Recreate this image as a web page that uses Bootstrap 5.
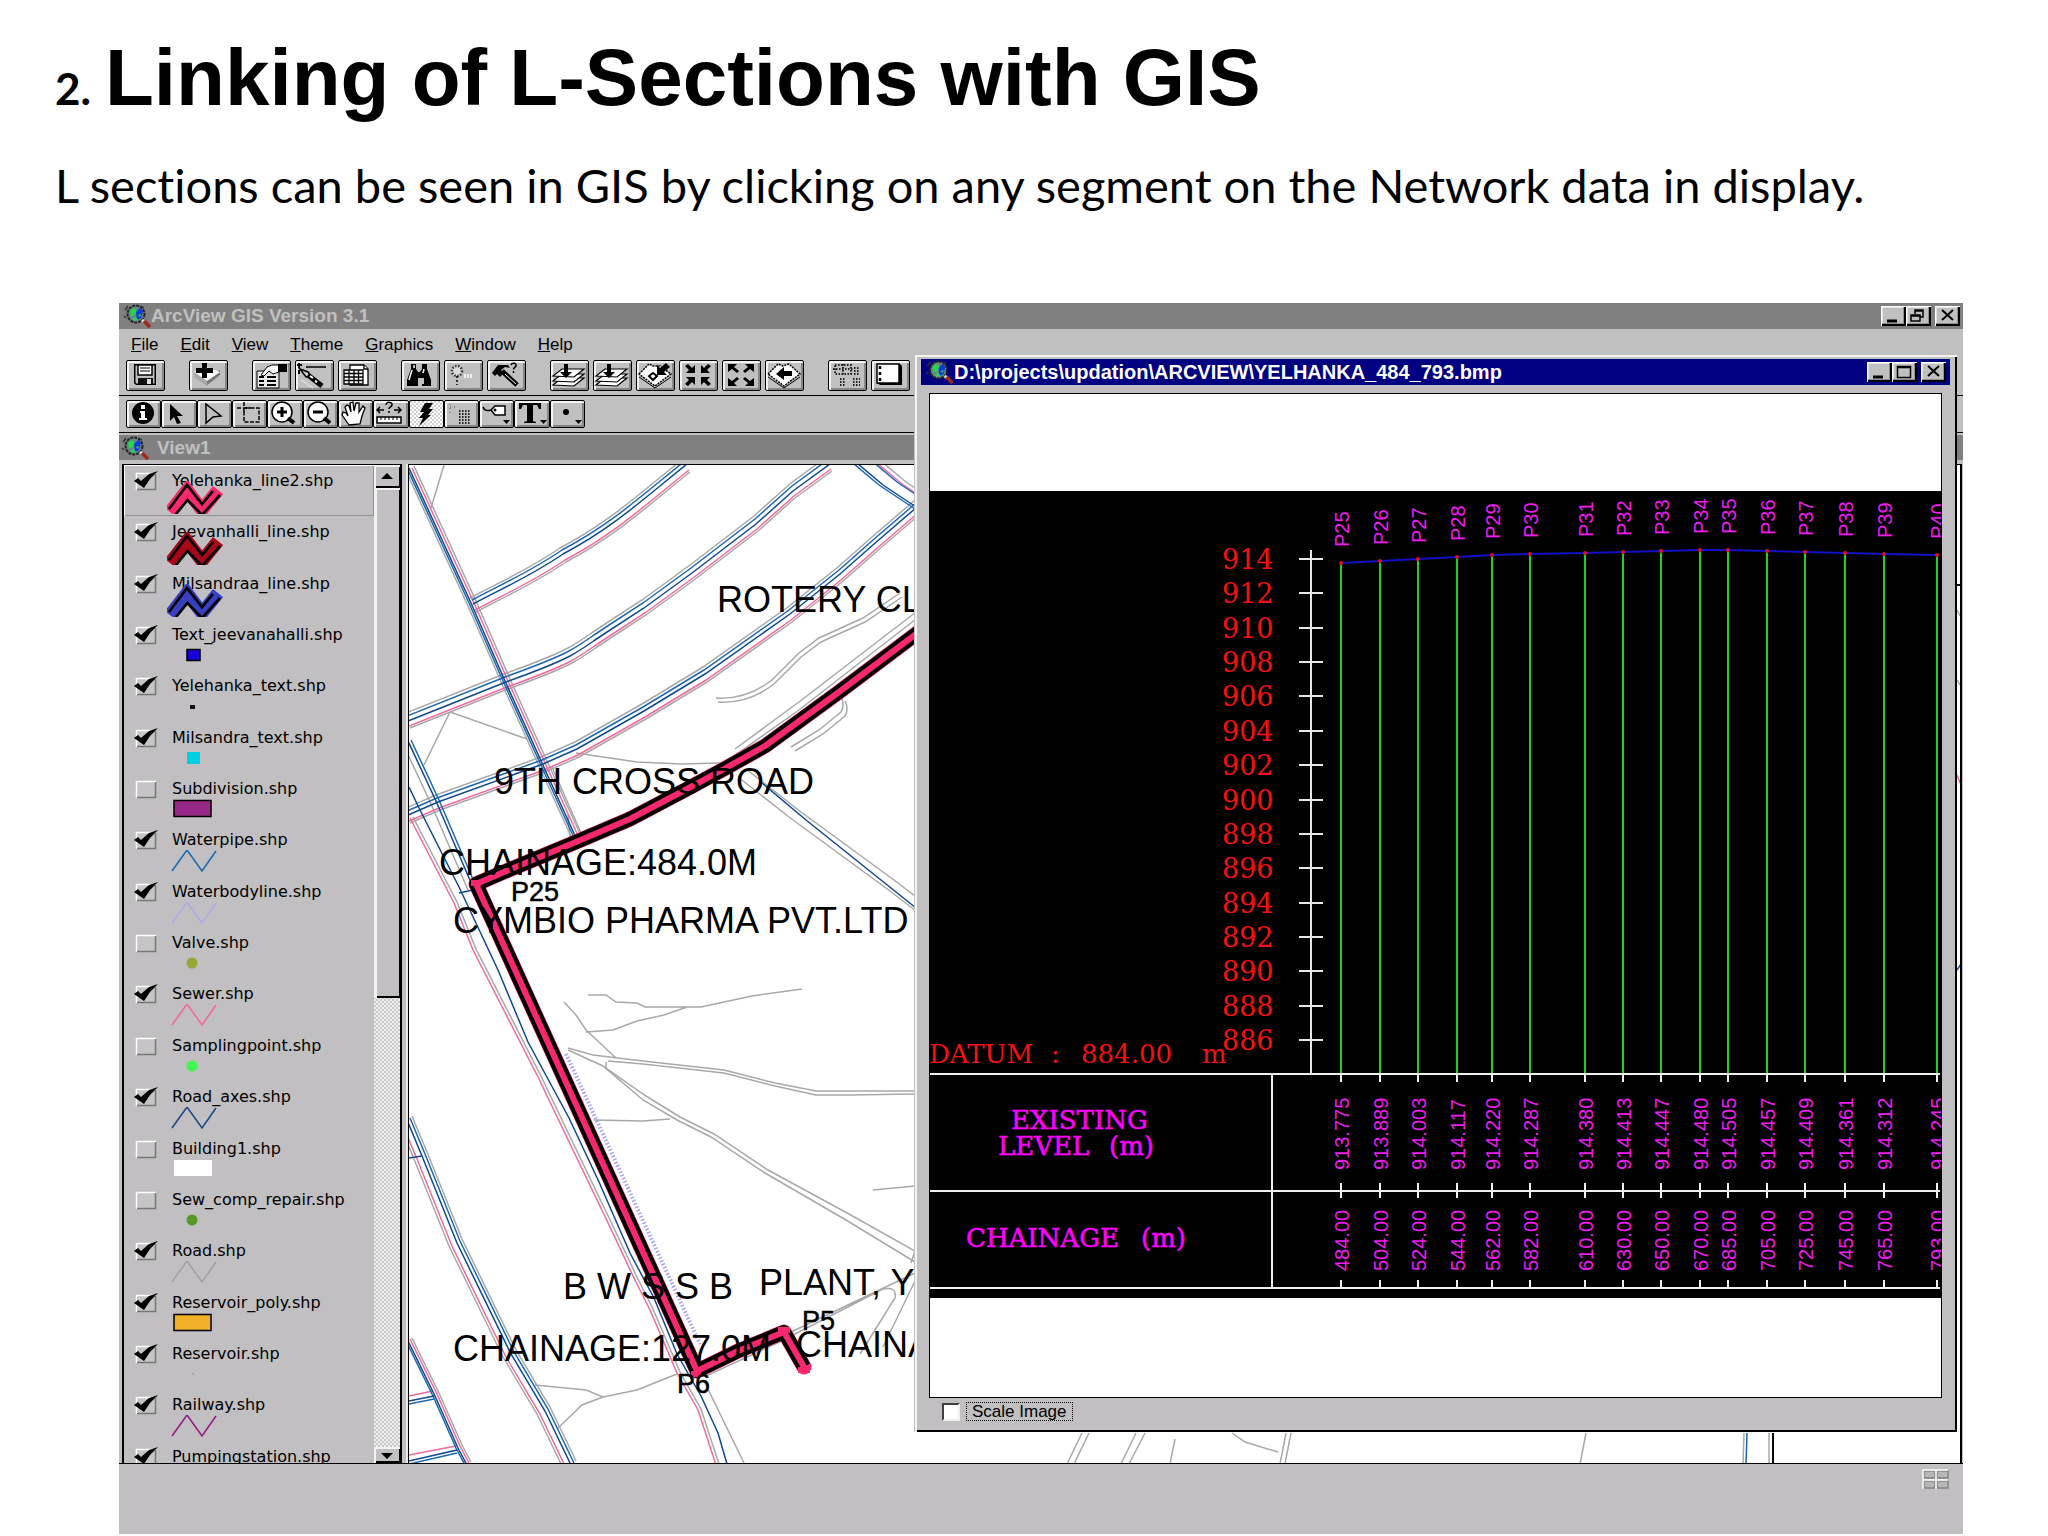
<!DOCTYPE html>
<html lang="en">
<head>
<meta charset="utf-8">
<meta name="viewport" content="width=device-width, initial-scale=1">
<title>Linking of L-Sections with GIS</title>
<link rel="stylesheet" href="https://cdn.jsdelivr.net/npm/bootstrap@5.3.0/dist/css/bootstrap.min.css">
<style>
  :root { --face:#c0c0c0; --pane:#c1bfc1; --shade:#808080; }
  body { background:#fff; color:#000; font-family:"Liberation Sans",Arial,sans-serif; overflow-x:hidden; }
  .slide-head { padding:32px 55px 90px; }
  .slide-head h1 { font-size:80px; line-height:92px; font-weight:700; margin-bottom:33px; }
  .slide-num { font-family:Lato,sans-serif; font-size:44px; line-height:1; margin-right:14px; }
  .slide-head p { font-family:Lato,sans-serif; font-size:47px; line-height:56px; font-variant-ligatures:none; }
  .desk { margin:0 85px 1px 119px; background:var(--face); }
  .bar-title { height:26px; background:var(--shade); color:var(--face); font-size:19px; line-height:26px; font-weight:700; padding:0 3px 0 4px; }
  .bar-title svg { flex:none; }
  .win-btn { width:25px; height:20px; padding:0; border:0; border-radius:0; background:var(--face); line-height:0;
    box-shadow:inset 1px 1px #fff, inset -2px -2px #000, inset -3px -3px #909090, inset 2px 2px #e4e4e4; }
  .menu-bar { height:28px; padding:4px 12px; gap:22px; font-size:17px; line-height:24px; }
  .menu-bar a { color:#000; text-decoration:none; }
  .tools-main { padding:3px 7px 4px; gap:24px; border-bottom:1px solid #000; }
  .tools-main .tool { width:39px; height:31px; }
  .tools-sub { padding:4px 7px; border-bottom:1px solid #000; }
  .tools-sub .strip { width:459px; }
  .tools-sub .tool { height:28px; flex:1 1 0; }
  .tool { padding:0; border:1px solid #000; border-radius:2px; background:var(--face); line-height:0; overflow:hidden;
    box-shadow:inset 2px 2px #f4f4f4, inset -2px -2px #868686; display:flex; align-items:center; justify-content:center; }
  .tool svg { flex:none; }
  .tool.held { background:repeating-conic-gradient(#fff 0 25%,#d0d0d0 0 50%) 0 0/4px 4px; box-shadow:none; }
  .bar-view { height:25px; margin-top:2px; line-height:25px; padding-left:2px; }
  .bar-view span { padding-left:8px; }
  .work { height:1004px; padding:4px 1px 0 3px; gap:6px; border-bottom:1px solid #000; }
  .toc { width:280px; flex:none; background:var(--pane); border:solid #000; border-width:1px 2px 0; overflow:hidden; }
  .toc-list { height:1027px; display:grid; grid-auto-rows:1fr; font-family:"DejaVu Sans",Verdana,sans-serif; font-size:16px; line-height:20px; }
  .toc-list li { padding:6px 0 0 10px; }
  .toc-list li.on { box-shadow:inset 1px 1px #fff, inset -1px -1px #909090; }
  .toc-list .rowline { gap:14px; height:20px; }
  .toc-list svg { display:block; margin-left:33px; position:relative; }
  .toc-list svg.tall { margin-top:-10px; }
  .tick { appearance:none; width:24px; height:20px; margin:0; flex:none; background:center/24px 20px no-repeat url("data:image/svg+xml,%3Csvg xmlns='http://www.w3.org/2000/svg' viewBox='0 0 24 20'%3E%3Cpath d='M2 2h20v17H2z' fill='%23c6c4c6'/%3E%3Cpath d='M2.500 19V2.500H22' fill='none' stroke='%23fff' stroke-width='1.500'/%3E%3Cpath d='M3 18.500h18.500V3' fill='none' stroke='%23777' stroke-width='1.500'/%3E%3C/svg%3E"); }
  .tick:checked { background-image:url("data:image/svg+xml,%3Csvg xmlns='http://www.w3.org/2000/svg' viewBox='0 0 24 20'%3E%3Cpath d='M2 2h20v17H2z' fill='%23c6c4c6'/%3E%3Cpath d='M2.500 19V2.500H22' fill='none' stroke='%23fff' stroke-width='1.500'/%3E%3Cpath d='M3 18.500h18.500V3' fill='none' stroke='%23777' stroke-width='1.500'/%3E%3Cpath d='M0 10l4-3 3 3 8-7 9-3-8 8-6 9z'/%3E%3C/svg%3E"); }
  .scroll { width:26px; flex:none; background:repeating-conic-gradient(#f0f0f0 0 25%,#c8c8c8 0 50%) 0 0/4px 4px; }
  .scroll button { border:0; padding:0; height:23px; line-height:0; border-radius:0; background:var(--pane); box-shadow:inset 2px 2px #f2f2f2, inset -1px -2px #000; }
  .scroll .down { height:16px; }
  .thumb { height:510px; background:var(--pane); box-shadow:inset 3px 2px #f2f2f2, inset -1px -2px #000; }
  .map-pane { background:#fff; border:solid #000; border-width:1px 2px 0 1px; min-width:0; box-shadow:-2px 0 #e8e8e8; }
  .map-pane svg { display:block; width:100%; height:100%; }
  .map-text { font:36px "Liberation Sans",Arial,sans-serif; }
  .map-node { font:27px "Liberation Sans",Arial,sans-serif; stroke:#000; stroke-width:.5px; }
  .status { height:70px; background:#c1bfc2; padding:5px 14px; }
  .pic-win { position:absolute; top:52px; left:796px; right:6px; background:var(--pane); padding:4px 7px 11px 6px;
    box-shadow:inset 2px 2px #f4f4f4, inset -2px -2px #000, -1px 0 #c0c0c0; }
  .pic-win .bar-title { background:#000080; color:#fff; font-size:20px; padding-right:4px; }
  .pic-view { margin:8px 8px 0; border:1px solid #000; background:#fff; padding:97px 0 99px; }
  .pic-view svg { display:block; width:100%; background:#000; }
  .ax { font:27px "DejaVu Serif",serif; fill:#f81010; }
  .datum { font:26px "DejaVu Serif",serif; fill:#f81010; }
  .cap { font:26px "DejaVu Serif",serif; fill:#f0f; stroke:#f0f; stroke-width:.5px; }
  .val { font:20px "Liberation Sans",Arial,sans-serif; fill:#f01cf0; }
  .pic-foot { padding:4px 0 0 21px; gap:6px; font-size:17px; line-height:17px; }
  .pic-foot input { appearance:none; width:18px; height:18px; margin:0; background:#fff; border:2px solid; border-color:#404040 #f0f0f0 #f0f0f0 #404040; }
  .pic-foot label { border:1px dotted #000; padding:0 5px; }
</style>
</head>
<body>
<svg width="0" height="0" class="position-absolute" aria-hidden="true">
  <defs>
    <symbol id="globe" viewBox="0 0 28 24"><circle cx="13" cy="10" r="8.500" fill="#6a8088" stroke="#222" stroke-width="2" stroke-dasharray="3 1"/><path d="M7 7l4-3 3 3-2 4-4 2z" fill="#20d848"/><path d="M13 8l4-4 3 3-2 7-4 2z" fill="#1038d8"/><path d="M9 14l4-1 2 3-4 1z" fill="#30d060"/><path d="M15 11l3-1-1 3z" fill="#30d060"/><path d="M2 6l3-4M3 14l-2-2M18 2l3 2" stroke="#333" stroke-width="1.500"/><path d="M19 16l3 2" stroke="#ddd" stroke-width="3"/><path d="M21 17l6 6" stroke="#a02818" stroke-width="3.500"/></symbol>
    <symbol id="thick" viewBox="0 -10 56 33"><path d="M3 21L20-1 35 19 51-1" fill="none" stroke="currentColor" stroke-width="13"/><path d="M2 18L20-6 35 13 46 0M9 23L20.500 9 35 24 53 4" fill="none" stroke="#000" stroke-width="2.700"/></symbol>
    <symbol id="thin" viewBox="0 0 56 24"><path d="M5 21L20 0 35 21 49 1" fill="none" stroke="currentColor" stroke-width="1.500"/></symbol>
    <symbol id="area" viewBox="0 0 56 24"><path d="M7 1.500h37v16H7z" fill="currentColor" stroke="#000" stroke-width="1.500"/></symbol>
    <symbol id="spot" viewBox="0 0 56 24"><circle cx="25" cy="10" r="5.500" fill="currentColor"/></symbol>
    <symbol id="stack" viewBox="0 0 39 31"><g fill="#fff" stroke="#000" stroke-width="1.200"><path d="M3 25l9-7h22l-10 8z"/><path d="M3 21l9-7h22l-10 8z"/><path d="M3 16l9-7h22l-10 8z"/></g><path d="M14 4h4v8h4l-6 6-6-6h4z"/></symbol>
    <symbol id="lens" viewBox="0 0 35 28"><circle cx="15" cy="12" r="10" fill="#fff" stroke="#000" stroke-width="1.500"/><path d="M21 18l6 5" stroke="#000" stroke-width="4"/></symbol>
    <symbol id="i-close" viewBox="0 0 25 20"><path d="M7 4l11 10M18 4L7 14" stroke="#000" stroke-width="2"/></symbol>
    <symbol id="i-min" viewBox="0 0 25 20"><path d="M6 13.500h10v3H6z"/></symbol>
  </defs>
</svg>

<header class="slide-head">
  <h1><span class="slide-num">2.</span>Linking of L-Sections with GIS</h1>
  <p class="mb-0">L sections can be seen in GIS by clicking on any segment on the Network data in display.</p>
</header>

<main class="desk position-relative">
  <div class="bar-title d-flex align-items-center">
    <svg width="28" height="24"><use href="#globe"/></svg><span class="flex-grow-1">ArcView GIS Version 3.1</span>
    <button class="win-btn" aria-label="Minimize"><svg width="25" height="20"><use href="#i-min"/></svg></button>
    <button class="win-btn" aria-label="Restore"><svg width="25" height="20" fill="none" stroke="#000" stroke-width="1.500"><path d="M9 8V4h8v7h-3M9 5h8"/><path d="M5 9h9v6H5zM5 10h9"/></svg></button>
    <button class="win-btn ms-1" aria-label="Close"><svg width="25" height="20"><use href="#i-close"/></svg></button>
  </div>
  <nav class="menu-bar d-flex">
    <a href="#"><u>F</u>ile</a><a href="#"><u>E</u>dit</a><a href="#"><u>V</u>iew</a><a href="#"><u>T</u>heme</a><a href="#"><u>G</u>raphics</a><a href="#"><u>W</u>indow</a><a href="#"><u>H</u>elp</a>
  </nav>
  <div class="tools-main d-flex">
    <button class="tool" aria-label="Save"><svg width="39" height="31"><path d="M8 4h22v21H10l-2-2z"/><path d="M9.500 5.500h19v18h-18l-1-1z" fill="#c0c0c0"/><path d="M12 5h14v10H12z" fill="#fff" stroke="#000" stroke-width="1.500"/><path d="M14 8h10M14 11h10" stroke="#000"/><path d="M12 18h15v6H12z" fill="#111"/><path d="M21 19h4v5h-4z" fill="#ddd"/></svg></button>
    <button class="tool" aria-label="Add theme"><svg width="39" height="31"><path d="M17 26l14-11V10l-14 8z" fill="#777"/><path d="M5 12l13-5 13 5-13 9z" fill="#fff"/><path d="M5 12v5l13 9v-5z" fill="#a8a8a8"/><path d="M13 3h5v5h6v5h-6v5h-5v-5H7V8h6z"/></svg></button>
    <div class="d-flex gap-1">
      <button class="tool" aria-label="Theme properties"><svg width="39" height="31"><path d="M5 11h22v17H5z" fill="#e8e8e8" stroke="#000"/><path d="M7 17h5M15 17h9M7 21h5M15 21h9M7 25h5M15 25h9" stroke="#000" stroke-width="2"/><path d="M9 15l6-8 5-2h7v7l-6 2-4-3-5 5z" fill="#fff" stroke="#000"/><path d="M26 4h9v8h-9z"/></svg></button>
      <button class="tool" aria-label="Edit legend"><svg width="39" height="31"><path d="M11 7h20" stroke="#000" stroke-width="1.500"/><path d="M4 3v5M2 5h5M4 10v4" stroke="#000" stroke-width="2"/><path d="M5 9l8 3 3 4-5 1z" fill="#ccc" stroke="#000" stroke-width="1.500"/><path d="M13 15l14 11" stroke="#000" stroke-width="5"/><path d="M15 16l3 2M20 21l2 1" stroke="#fff" stroke-width="2"/><path d="M6 20l12 8" stroke="#eee"/></svg></button>
      <button class="tool" aria-label="Open table"><svg width="39" height="31" fill="#fff" stroke="#000" stroke-width="1.300"><path d="M12 5h14l4 4v16H12z"/><path d="M26 5v4h4"/><path d="M6 10h19v14H6zM6 13.500h19M6 17h19M6 20.500h19M11 10v14M16 10v14M20.500 10v14"/></svg></button>
    </div>
    <div class="d-flex gap-1">
      <button class="tool" aria-label="Find"><svg width="39" height="31"><path d="M10 4h5v5l2 3h2l2-3V4h5v5l4 11v6h-9v-8h-4v8H6v-6l4-11z"/><path d="M11 10L8 20M23 9l-1 4M13 5v3M22 18v6" stroke="#fff" stroke-width="1.500"/></svg></button>
      <button class="tool" aria-label="Locate"><svg width="39" height="31"><circle cx="13" cy="11" r="5" fill="#ddd" stroke="#333" stroke-width="2.500" stroke-dasharray="1.500 1.500"/><path d="M13 16v9" stroke="#000" stroke-width="1.500" stroke-dasharray="2 2"/><path d="M20 16h9" stroke="#eee" stroke-width="4" stroke-dasharray="2 1"/></svg></button>
      <button class="tool" aria-label="Query builder"><svg width="39" height="31"><path d="M5 13l6-8h10l2 3-5-1-4 3 3 3-4 4-3-3-2 2z"/><path d="M15 11l15 14" stroke="#000" stroke-width="5"/><path d="M18 14l11 10" stroke="#fff"/><path d="M24 5c1-3 6-2 5 1-.5 1.500-2.500 1.500-2.500 3.500M26.500 11v2" fill="none" stroke="#000" stroke-width="1.500"/></svg></button>
    </div>
    <div class="d-flex gap-1">
      <button class="tool" aria-label="Zoom to full extent"><svg width="39" height="31"><use href="#stack"/></svg></button>
      <button class="tool" aria-label="Zoom to active theme"><svg width="39" height="31"><use href="#stack"/></svg></button>
      <button class="tool" aria-label="Zoom to selected"><svg width="39" height="31"><path d="M3 14L13 4l4 2h7l11 8-16 12z" fill="#fff" stroke="#000" stroke-width="1.500" stroke-dasharray="2 1"/><path d="M3 17l16 11 16-11" fill="none" stroke="#000"/><path d="M21 15V5l3 3 6-5 4 4-6 5 3 3z"/><path d="M17 13l4 3-4 4-4-4z" fill="none" stroke="#000" stroke-width="2"/></svg></button>
      <button class="tool" aria-label="Zoom in"><svg width="39" height="31"><path d="M16 13V5l-3 3-4-4-3 2 4 4-3 3zM22 13V5l3 3 4-4 3 2-4 4 3 3zM16 17v8l-3-3-4 4-3-2 4-4-3-3zM22 17v8l3-3 4 4 3-2-4-4 3-3z"/></svg></button>
      <button class="tool" aria-label="Zoom out"><svg width="39" height="31"><path d="M6 4h9l-3 3 5 4-2 2-5-4-4 3zM32 4h-9l3 3-5 4 2 2 5-4 4 3zM6 26h9l-3-3 5-4-2-2-5 4-4-3zM32 26h-9l3-3-5-4 2-2 5 4 4-3z"/></svg></button>
      <button class="tool" aria-label="Previous extent"><svg width="39" height="31"><path d="M3 14L13 4l5 2 6-2 11 10-16 12z" fill="#fff" stroke="#000" stroke-width="1.500" stroke-dasharray="2 1"/><path d="M3 17l16 11 16-11" fill="none" stroke="#000"/><path d="M11 14l8-7v4h8v5h-8v4z"/></svg></button>
    </div>
    <div class="d-flex gap-1">
      <button class="tool" aria-label="Select by graphics"><svg width="39" height="31" fill="none" stroke="#222" stroke-width="2" stroke-dasharray="1.500 1.500"><path d="M7 5h16v9H7zM15 4v12M5 9h20"/><path d="M26 8h6M26 11h6M26 14h6M12 19h6M12 22h6M12 25h6M25 19h7M25 22h7M25 25h7"/></svg></button>
      <button class="tool" aria-label="Layout"><svg width="39" height="31"><path d="M6 4h23l2 2v19H9l-3-2z"/><path d="M6 4h22v19H6z" fill="#fff" stroke="#000" stroke-width="1.500"/><path d="M9 6v16" stroke="#000" stroke-width="2.500" stroke-dasharray="3 3"/></svg></button>
    </div>
  </div>
  <div class="tools-sub">
    <div class="strip d-flex">
      <button class="tool" aria-label="Identify"><svg width="35" height="28"><circle cx="17" cy="13" r="11"/><path d="M14 11h5v7h2v2h-8v-2h2v-5h-1zM15 5h4v4h-4z" fill="#fff"/></svg></button>
      <button class="tool" aria-label="Pointer"><svg width="35" height="28"><path d="M9 4l13 12h-6l4 7-4 1-3-7-4 4z"/></svg></button>
      <button class="tool" aria-label="Vertex edit"><svg width="35" height="28"><path d="M9 4l15 12-8 1-7 6z" fill="none" stroke="#000" stroke-width="1.500"/></svg></button>
      <button class="tool" aria-label="Select feature"><svg width="35" height="28" fill="none" stroke="#000" stroke-width="1.500"><path d="M13 8h14v14H12V12" stroke-dasharray="4 1.500"/><path d="M5 8h14M12 2v12" stroke-dasharray="4 2"/></svg></button>
      <button class="tool" aria-label="Magnify"><svg width="35" height="28"><use href="#lens"/><path d="M10 12h10M15 7v10" stroke="#000" stroke-width="3"/></svg></button>
      <button class="tool" aria-label="Reduce"><svg width="35" height="28"><use href="#lens"/><path d="M10 12h10" stroke="#000" stroke-width="3"/></svg></button>
      <button class="tool" aria-label="Pan"><svg width="35" height="28"><path d="M11 25L4 15l1-3 3 1 2 3-3-9 2-2 2 1 2 6-1-9 3-1 1 9 2-8 3 0v9l4-6 2 2-3 8-2 8z" fill="#fff" stroke="#000" stroke-width="1.300"/></svg></button>
      <button class="tool" aria-label="Measure"><svg width="35" height="28"><path d="M4 17h24v6H4z" fill="#fff" stroke="#000" stroke-width="1.500"/><path d="M8 17v3M12 17v3M16 17v3M20 17v3M24 17v3" stroke="#000"/><path d="M4 10h7M21 10h7M7 7l-3 3 3 3M25 7l3 3-3 3M13 5c0-4 7-3 6 0-.5 2-3 2-3 4M16 11v2" fill="none" stroke="#000" stroke-width="1.500"/></svg></button>
      <button class="tool held" aria-label="Hot link"><svg width="35" height="28"><path d="M16 3h8l-4 6h4l-5 6h3l-12 11 4-8h-4l5-6h-4z"/></svg></button>
      <button class="tool" aria-label="Area of interest"><svg width="35" height="28"><path d="M15 11h12M15 14h12M15 17h12M15 20h12M15 23h12" stroke="#222" stroke-width="1.800" stroke-dasharray="1.500 1.500"/><path d="M6 4v10M6 7h8" stroke="#555" stroke-dasharray="1 3"/></svg></button>
      <button class="tool" aria-label="Label"><svg width="35" height="28"><path d="M12 10l4-4h10v9H16z" fill="#fff" stroke="#000" stroke-width="1.500"/><path d="M4 7c1 4 5 4 8 3" fill="none" stroke="#000" stroke-width="1.500"/><circle cx="16" cy="10" r="1.500"/><path d="M24 20h7l-3.500 4z"/></svg></button>
      <button class="tool" aria-label="Text"><svg width="35" height="28"><path d="M4 3h22v6h-2l-2-4h-4v16l3 1v1H9v-1l3-1V5H8L6 9H4z"/><path d="M25 20h7l-3.500 4z"/></svg></button>
      <button class="tool" aria-label="Draw point"><svg width="35" height="28"><circle cx="16" cy="12" r="3"/><path d="M25 20h7l-3.500 4z"/></svg></button>
    </div>
  </div>
  <div class="bar-title bar-view d-flex align-items-center"><svg width="28" height="24"><use href="#globe"/></svg><span>View1</span></div>

  <div class="work d-flex">
    <aside class="toc d-flex">
      <ul class="toc-list list-unstyled mb-0 flex-grow-1">
        <li class="on"><div class="rowline d-flex"><input class="tick" type="checkbox" id="t1" checked><label for="t1">Yelehanka_line2.shp</label></div><svg class="tall" width="56" height="33" color="#f8286e"><use href="#thick"/></svg></li>
        <li><div class="rowline d-flex"><input class="tick" type="checkbox" id="t2" checked><label for="t2">Jeevanhalli_line.shp</label></div><svg class="tall" width="56" height="33" color="#a80818"><use href="#thick"/></svg></li>
        <li><div class="rowline d-flex"><input class="tick" type="checkbox" id="t3" checked><label for="t3">Milsandraa_line.shp</label></div><svg class="tall" width="56" height="33" color="#3840c0"><use href="#thick"/></svg></li>
        <li><div class="rowline d-flex"><input class="tick" type="checkbox" id="t4" checked><label for="t4">Text_jeevanahalli.shp</label></div><svg width="56" height="24"><path d="M20 4.500h13v11H20z" fill="#1800d8" stroke="#000" stroke-width="1.500"/></svg></li>
        <li><div class="rowline d-flex"><input class="tick" type="checkbox" id="t5" checked><label for="t5">Yelehanka_text.shp</label></div><svg width="56" height="24"><path d="M23 9h5v4h-5z" fill="#111"/></svg></li>
        <li><div class="rowline d-flex"><input class="tick" type="checkbox" id="t6" checked><label for="t6">Milsandra_text.shp</label></div><svg width="56" height="24"><path d="M20 4h13v12H20z" fill="#00d0e0"/></svg></li>
        <li><div class="rowline d-flex"><input class="tick" type="checkbox" id="t7"><label for="t7">Subdivision.shp</label></div><svg width="56" height="24" color="#982888"><use href="#area"/></svg></li>
        <li><div class="rowline d-flex"><input class="tick" type="checkbox" id="t8" checked><label for="t8">Waterpipe.shp</label></div><svg width="56" height="24" color="#1868b0"><use href="#thin"/></svg></li>
        <li><div class="rowline d-flex"><input class="tick" type="checkbox" id="t9" checked><label for="t9">Waterbodyline.shp</label></div><svg width="56" height="24" color="#b0a8e8"><use href="#thin"/></svg></li>
        <li><div class="rowline d-flex"><input class="tick" type="checkbox" id="t10"><label for="t10">Valve.shp</label></div><svg width="56" height="24" color="#98a838"><use href="#spot"/></svg></li>
        <li><div class="rowline d-flex"><input class="tick" type="checkbox" id="t11" checked><label for="t11">Sewer.shp</label></div><svg width="56" height="24" color="#f06898"><use href="#thin"/></svg></li>
        <li><div class="rowline d-flex"><input class="tick" type="checkbox" id="t12"><label for="t12">Samplingpoint.shp</label></div><svg width="56" height="24" color="#40f850"><use href="#spot"/></svg></li>
        <li><div class="rowline d-flex"><input class="tick" type="checkbox" id="t13" checked><label for="t13">Road_axes.shp</label></div><svg width="56" height="24" color="#104888"><use href="#thin"/></svg></li>
        <li><div class="rowline d-flex"><input class="tick" type="checkbox" id="t14"><label for="t14">Building1.shp</label></div><svg width="56" height="24"><path d="M7 1h38v16H7z" fill="#fff"/></svg></li>
        <li><div class="rowline d-flex"><input class="tick" type="checkbox" id="t15"><label for="t15">Sew_comp_repair.shp</label></div><svg width="56" height="24" color="#589828"><use href="#spot"/></svg></li>
        <li><div class="rowline d-flex"><input class="tick" type="checkbox" id="t16" checked><label for="t16">Road.shp</label></div><svg width="56" height="24" color="#a0a0a0"><use href="#thin"/></svg></li>
        <li><div class="rowline d-flex"><input class="tick" type="checkbox" id="t17" checked><label for="t17">Reservoir_poly.shp</label></div><svg width="56" height="24" color="#f0b028"><use href="#area"/></svg></li>
        <li><div class="rowline d-flex"><input class="tick" type="checkbox" id="t18" checked><label for="t18">Reservoir.shp</label></div><svg width="56" height="24"><path d="M25 9h2v2h-2z" fill="#a8a8b0"/></svg></li>
        <li><div class="rowline d-flex"><input class="tick" type="checkbox" id="t19" checked><label for="t19">Railway.shp</label></div><svg width="56" height="24" color="#901880"><use href="#thin"/></svg></li>
        <li><div class="rowline d-flex"><input class="tick" type="checkbox" id="t20" checked><label for="t20">Pumpingstation.shp</label></div></li>
      </ul>
      <div class="scroll d-flex flex-column">
        <button aria-label="Scroll up"><svg width="12" height="7"><path d="M0 6h12L6 0z"/></svg></button>
        <div class="thumb"></div>
        <button class="down mt-auto" aria-label="Scroll down"><svg width="12" height="7"><path d="M0 1h12L6 7z"/></svg></button>
      </div>
    </aside>

    <section class="map-pane flex-grow-1">
      <svg viewBox="409 465 1551 999" preserveAspectRatio="xMinYMin slice" fill="none" stroke-width="1.500" role="img" aria-label="Sewer network map">
        <defs>
          <path id="ra" d="M409 468L471 603 505 681 542 763 577 840"/>
          <path id="rb" d="M472 603C500 588 530 575 562 553 610 528 640 500 686 463"/>
          <path id="rc" d="M407 720L505 681C530 672 552 664 569 655 582 648 592 640 603 633L643 607 691 572 755 523 792 490 829 463"/>
          <path id="rd" d="M407 814L437 801 542 763 576 748 643 710 704 673 789 613 839 573 873 543 916 506"/>
          <path id="re" d="M855 463L880 484 916 508"/>
          <path id="rf" d="M409 740L437 800 473 884"/>
          <path id="rg" d="M407 1120L422 1156 457 1243 511 1354 545 1411 571 1465"/>
          <path id="rh" d="M407 1341L434 1396 457 1448 466 1465"/>
          <path id="pk" d="M410 818L454 903 473 950 538 1077 572 1148 610 1227 633 1276 650 1310 677 1373 698 1410 716 1465"/>
          <path id="route" d="M920 631L839 692 765 746 724 769 687 789 630 819 576 842 511 869 476 884 697 1371 738 1351 784 1332 804 1367"/>
        </defs>
        <g stroke="#a8a8a8">
          <use href="#ra" x="5" y="-2"/><use href="#ra" x="-3" y="3"/>
          <use href="#rb" x="-2" y="-5"/><use href="#rb" x="4" y="9"/>
          <use href="#rc" x="-1" y="-7"/><use href="#rc" x="3" y="8"/>
          <use href="#rd" x="-1" y="-6"/><use href="#rd" x="3" y="9"/>
          <use href="#re" x="26" y="-2"/><use href="#rf" x="-5" y="6"/>
          <use href="#rg" x="5" y="-4"/><use href="#rg" x="-8" y="3"/>
          <use href="#rh" x="5" y="-3"/><use href="#pk" x="3" y="-1"/>
          <path d="M444 465l-13 43M450 712l77 27M450 712l-26 53M576 753l61 9 44 2 40-1M704 1381l41 84"/>
          <path id="g1" d="M716 698q30 2 56-18l27-27 20-15 44-20 37-25"/><use href="#g1" x="2" y="4"/>
          <path id="g2" d="M841 697q4 8 0 15l-22 18-28 17"/><use href="#g2" x="4" y="4"/>
          <path id="g3" d="M738 777l51 40 101 74 26 20"/><use href="#g3" x="8" y="-8"/>
          <path d="M582 835l55-27 87-45 75-53 117-91M552 767l30 68M568 814l2 26-40 16-52 22M916 612L799 702 735 749"/>
          <path d="M588 995h18l10 7 21 1 8 4h56l51-11 50-7M564 1002l12 13 10 15 30 28M586 1032l27-2 24-9 27-6 23-8"/>
          <path d="M568 1048l25 7 50 6 81 9 51 13 41 8h100"/><path d="M608 1061l35 3 81 9 51 13 41 9h34l66-1"/>
          <path d="M568 1050l35 16 40 34 34 20 34 17 54 36 81 47 69 42"/><path d="M606 1062v6l40 28 34 21 34 17 54 36 81 44 66 37-4 12"/>
          <path d="M594 1120l49 1 27-2M873 1190l42-4M535 1385l51 5 17 7 34-7 40-16M603 1397l-21 8-25 24"/>
          <path d="M789 1333l126-60M860 1354l35-56q2-12-12-9l-92 47M915 1281l-32 66M706 1376l80-37"/>
          <path d="M1082 1433l-15 31M1089 1433l-15 31M1136 1433l-15 31M1145 1433l-16 31M1175 1439l-5 25M1232 1433l13 9 33 10M1286 1433l-6 31M1291 1433l-6 31M1586 1433l-6 31M1744 1433l-1 31M1769 1433v31M1957 610l3 6M1957 680l3 5"/>
        </g>
        <g stroke="#f068a0">
          <use href="#ra" x="3" y="0"/><use href="#rb" x="3" y="7"/><use href="#rc" x="2" y="6"/><use href="#rd" x="2" y="7"/>
          <use href="#re" x="22" y="0"/><use href="#rg" x="-5" y="3"/><use href="#rh" x="3" y="-2"/><use href="#pk"/>
          <path d="M409 1396l24-5M409 1455l47-9M1957 775l4 10"/>
        </g>
        <g stroke="#1c68b0">
          <use href="#ra" x="-2"/><use href="#rb" x="0" y="-3"/><use href="#rc" y="-4"/><use href="#rd" y="-3"/><use href="#re" x="-1" y="1"/>
          <use href="#rf" x="2"/><use href="#rg" x="3" y="-2"/><use href="#rh" x="-1"/><use href="#re" x="17" y="-2"/>
          <path d="M409 1404l25-5M409 1464l48-11M1747 1433l-1 31"/>
        </g>
        <g stroke="#104890">
          <use href="#ra"/><use href="#rb" x="1" y="1"/><use href="#rc" x="1" y="1"/><use href="#rd" x="1" y="1"/><use href="#re" x="3" y="1"/>
          <use href="#rf" x="-1" y="1"/><use href="#rg"/><use href="#rh" x="1"/>
          <path d="M409 787l11 23 39 77 39 83 30 72 41 76 30 64 31 71 24 45 23 56 24 42 17 37 9 31M459 893l14-3M409 1158l13-2M409 1401l25-5M409 1461l48-11M762 783l44 37 110 88M1957 970l4-6"/>
        </g>
        <path d="M1773 1433v31M1956 585h6" stroke="#000" stroke-width="2"/>
        <path d="M566 1054L700 1344" stroke="#a8a0f8" stroke-width="4" stroke-dasharray="1.500 2"/>
        <g stroke-linejoin="round">
          <use href="#route" stroke="#f8286e" stroke-width="15" stroke-linecap="round"/>
          <use href="#route" stroke="#000" stroke-width="14"/>
          <use href="#route" stroke="#f8286e" stroke-width="6" stroke-linecap="round"/>
          <path d="M471 883h10M691 1374h10M778 1330h12M798 1370h12" stroke="#f8286e" stroke-width="6"/>
        </g>
        <g fill="#000" class="map-text">
          <text x="717" y="612">ROTERY CLUB</text><text x="494" y="794">9TH CROSS ROAD</text><text x="439" y="875">CHAINAGE:484.0M</text>
          <text x="453" y="933">CYMBIO PHARMA PVT.LTD</text><text x="563" y="1299">B W S S B</text><text x="759" y="1295">PLANT, YELHANKA</text>
          <text x="453" y="1361">CHAINAGE:127.0M</text><text x="796" y="1357">CHAINAGE</text>
        </g>
        <g fill="#000" class="map-node"><text x="511" y="901">P25</text><text x="802" y="1330">P5</text><text x="677" y="1393">P6</text></g>
      </svg>
    </section>
  </div>
  <footer class="status d-flex justify-content-end align-items-start">
    <svg width="27" height="21"><path d="M2 2h11v7H2zM15 2h11v7H15zM2 12h11v7H2zM15 12h11v7H15z" fill="#b8b6b8" stroke="#858585" stroke-width="1.500"/><path d="M1 20V1h25M1 11h25M14 1v19" fill="none" stroke="#fff" stroke-width="1.500"/></svg>
  </footer>

  <section class="pic-win">
    <div class="bar-title d-flex align-items-center">
      <svg width="29" height="24"><use href="#globe"/></svg><span class="flex-grow-1">D:\projects\updation\ARCVIEW\YELHANKA_484_793.bmp</span>
      <button class="win-btn" aria-label="Minimize"><svg width="25" height="20"><use href="#i-min"/></svg></button>
      <button class="win-btn" aria-label="Maximize"><svg width="25" height="20"><path d="M5.500 4.500h13v11h-13zM5.500 5.500h13" fill="none" stroke="#000" stroke-width="1.500"/></svg></button>
      <button class="win-btn ms-1" aria-label="Close"><svg width="25" height="20"><use href="#i-close"/></svg></button>
    </div>
    <div class="pic-view">
      <svg id="profile" viewBox="930 491 1011 807" role="img" aria-label="Longitudinal section profile">
        <g id="levels" stroke="#e8e8e8" stroke-width="2"><path d="M1311 550v524"/></g>
        <text class="datum" y="1063"><tspan x="929">DATUM</tspan> <tspan x="1051">:</tspan> <tspan x="1081">884.00</tspan> <tspan x="1202">m</tspan></text>
        <text class="cap" x="1011" y="1129">EXISTING</text>
        <text class="cap" y="1155"><tspan x="998">LEVEL</tspan> <tspan x="1109">(m)</tspan></text>
        <text class="cap" y="1247"><tspan x="966">CHAINAGE</tspan> <tspan x="1141">(m)</tspan></text>
        <g id="stations"></g>
        <path d="M930 1074h1010M930 1191h1010M930 1288h1010M1272 1074v214" stroke="#f0f0f0" stroke-width="2" fill="none"/>
      </svg>
    </div>
    <div class="pic-foot d-flex align-items-center"><input type="checkbox" id="scale"><label for="scale">Scale Image</label></div>
  </section>
</main>

<script>
  // Station name, drawing x, ground-line y, level, chainage
  const stations = [
    ['P25',1341,563,'913.775','484.00'],['P26',1380,561,'913.889','504.00'],['P27',1418,559,'914.003','524.00'],
    ['P28',1457,557,'914.117','544.00'],['P29',1492,555,'914.220','562.00'],['P30',1530,554,'914.287','582.00'],
    ['P31',1585,553,'914.380','610.00'],['P32',1623,552,'914.413','630.00'],['P33',1661,551,'914.447','650.00'],
    ['P34',1700,550,'914.480','670.00'],['P35',1728,550,'914.505','685.00'],['P36',1767,551,'914.457','705.00'],
    ['P37',1805,552,'914.409','725.00'],['P38',1845,553,'914.361','745.00'],['P39',1884,554,'914.312','765.00'],
    ['P40',1937,555,'914.245','793.00']];
  const up = (x, y, t) => `<text class="val" transform="translate(${x} ${y}) rotate(-90)">${t}</text>`;
  let out = `<polyline points="${stations.map(s => s[1] + ',' + s[2]).join(' ')}" fill="none" stroke="#1010c8" stroke-width="2"/>`;
  for (const [name, x, y, level, chain] of stations) {
    out += `<path d="M${x} ${y}V1074" stroke="#20d020" stroke-width="2"/><circle cx="${x}" cy="${y}" r="2" fill="#e01010"/>`
         + `<path d="M${x} 1074v8M${x} 1183v15M${x} 1280v8" stroke="#f0f0f0" stroke-width="2"/>`
         + up(x + 8, y - 16, name) + up(x + 8, 1170, level) + up(x + 8, 1271, chain);
  }
  document.getElementById('stations').innerHTML = out;
  let ticks = '';
  for (let i = 0; i < 15; i++) {
    const y = Math.round(559 + i * 34.36);
    ticks += `<path d="M1299 ${y}h24"/><text class="ax" stroke="none" x="1222" y="${y + 10}">${914 - 2 * i}</text>`;
  }
  document.getElementById('levels').innerHTML += ticks;
</script>
<script src="https://cdn.jsdelivr.net/npm/bootstrap@5.3.0/dist/js/bootstrap.bundle.min.js"></script>
</body>
</html>
